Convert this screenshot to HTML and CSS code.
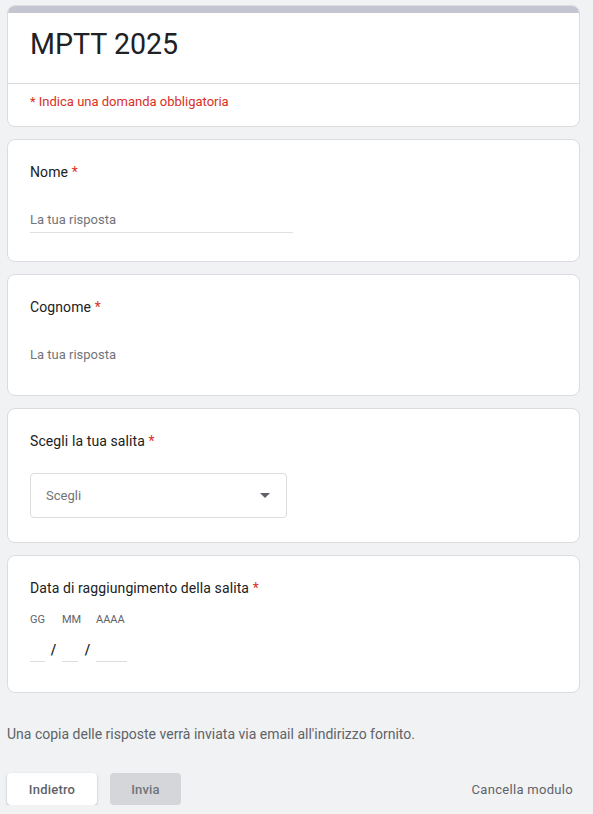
FILE: index.html
```html
<!DOCTYPE html>
<html lang="it">
<head>
<meta charset="utf-8">
<title>MPTT 2025</title>
<link rel="stylesheet" href="styles.css">
</head>
<body>
<div class="page">
  <div class="card header">
    <div class="accent"></div>
    <h1 class="title">MPTT 2025</h1>
    <div class="divider"></div>
    <div class="required-note">* Indica una domanda obbligatoria</div>
  </div>

  <div class="card question">
    <div class="label">Nome <span class="star">*</span></div>
    <div class="text-input underlined">La tua risposta</div>
  </div>

  <div class="card question">
    <div class="label">Cognome <span class="star">*</span></div>
    <div class="text-input">La tua risposta</div>
  </div>

  <div class="card question">
    <div class="label">Scegli la tua salita <span class="star">*</span></div>
    <div class="select">
      <span>Scegli</span>
      <svg class="caret" width="10" height="5" viewBox="0 0 10 5"><path d="M0 0h10L5 5z" fill="#5f6368"/></svg>
    </div>
  </div>

  <div class="card question">
    <div class="label">Data di raggiungimento della salita <span class="star">*</span></div>
    <div class="date">
      <div class="date-part dd"><div class="date-label">GG</div><div class="date-line"></div></div>
      <div class="slash">/</div>
      <div class="date-part mm"><div class="date-label">MM</div><div class="date-line"></div></div>
      <div class="slash">/</div>
      <div class="date-part yyyy"><div class="date-label">AAAA</div><div class="date-line"></div></div>
    </div>
  </div>

  <p class="copy-note">Una copia delle risposte verrà inviata via email all'indirizzo fornito.</p>

  <div class="actions">
    <button class="btn back">Indietro</button>
    <button class="btn send">Invia</button>
    <span class="clear">Cancella modulo</span>
  </div>
</div>
</body>
</html>
```

FILE: styles.css
```css
html, body {
  margin: 0;
  padding: 0;
  background: #f0f2f4;
}
body {
  font-family: Roboto, "Liberation Sans", Arial, sans-serif;
  color: #202124;
}
.page {
  width: 573px;
  margin-left: 7px;
  padding-top: 5px;
  display: flex;
  flex-direction: column;
}
.card {
  background: #fff;
  border: 1px solid #dadce0;
  border-radius: 8px;
  box-sizing: border-box;
  margin-bottom: 12px;
  overflow: hidden;
}
.header .accent {
  height: 8px;
  background: #c3c6d1;
  margin: -1px -1px 0;
}
.title {
  margin: 0;
  font-weight: 400;
  font-size: 28.6px;
  line-height: 36px;
  padding: 13px 22px 0;
  height: 70px;
  box-sizing: border-box;
}
.divider {
  height: 1px;
  background: #dadce0;
}
.required-note {
  color: #d93025;
  font-size: 13px;
  line-height: 16px;
  padding: 10px 22px 16px;
}
.question {
  padding: 24px 22px 0;
}
.label {
  font-size: 14px;
  line-height: 16px;
  height: 16px;
  letter-spacing: 0.1px;
}
.star {
  color: #d93025;
}
.text-input {
  margin-top: 32px;
  width: 263px;
  font-size: 13px;
  line-height: 16px;
  padding-bottom: 4px;
  color: #70757a;
  border-bottom: 1px solid #fff;
  margin-bottom: 27.5px;
}
.text-input.underlined {
  border-bottom-color: #e0e0e0;
}
.select {
  margin-top: 24px;
  width: 257px;
  height: 45px;
  box-sizing: border-box;
  border: 1px solid #dadce0;
  border-radius: 4px;
  display: flex;
  align-items: center;
  justify-content: space-between;
  padding: 0 16px 0 15px;
  font-size: 13px;
  color: #70757a;
  margin-bottom: 24px;
}
.caret {
  display: block;
}
.date {
  display: flex;
  align-items: flex-end;
  margin-top: 17px;
  margin-bottom: 30px;
}
.date-part {
  display: flex;
  flex-direction: column;
}
.date-part.dd { width: 15px; }
.date-part.mm { width: 17px; }
.date-part.yyyy { width: 31px; }
.date-label {
  font-size: 11px;
  line-height: 13px;
  color: #5f6368;
  height: 13px;
  white-space: nowrap;
}
.date-line {
  margin-top: 35px;
  height: 1px;
  background: #dadce0;
}
.date-part.mm .date-line { width: 16px; }
.slash {
  font-size: 14px;
  font-weight: 500;
  line-height: 16px;
  width: 17px;
  text-align: center;
  margin-bottom: 4px;
  color: #202124;
}
.copy-note {
  margin: 21px 0 0;
  font-size: 14px;
  line-height: 16px;
  color: #5f6368;
}
.actions {
  display: flex;
  align-items: center;
  margin-top: 31px;
}
.btn {
  font-family: Roboto, "Liberation Sans", Arial, sans-serif;
  font-size: 13px;
  font-weight: 500;
  height: 32px;
  border: none;
  border-radius: 4px;
  padding: 0;
  letter-spacing: 0.2px;
}
.back {
  width: 90px;
  background: #fff;
  color: #5f6368;
  box-shadow: 0 1px 2px rgba(60,64,67,0.25), 0 1px 3px rgba(60,64,67,0.1);
}
.send {
  width: 71px;
  margin-left: 13px;
  background: #d4d6d9;
  color: #70757a;
}
.clear {
  margin-left: auto;
  margin-right: 7px;
  font-size: 13px;
  font-weight: 400;
  color: #5f6368;
  letter-spacing: 0.3px;
}
```
